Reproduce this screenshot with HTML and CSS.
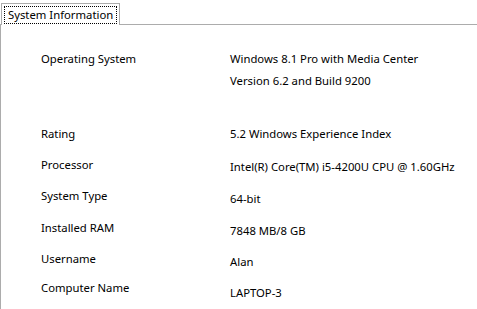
FILE: index.html
```html
<!DOCTYPE html>
<html lang="en">

<head>
    <meta charset="UTF-8">
    <meta name="viewport" content="width=device-width, initial-scale=1.0">
    <title>System Information</title>
    <link rel="stylesheet" href="styles.css">
</head>

<body>

    <div class="tabs">
        <div class="tab-strip">
            <div class="tab active"><span class="tab-label">System Information</span></div>
        </div>

        <div class="tab-page">
            <div class="info-grid">
                <div class="info-row os">
                    <span class="label">Operating System</span>
                    <span class="value">Windows 8.1 Pro with Media Center<br>Version 6.2 and Build 9200</span>
                </div>
                <div class="info-row">
                    <span class="label">Rating</span>
                    <span class="value">5.2 Windows Experience Index</span>
                </div>
                <div class="info-row">
                    <span class="label">Processor</span>
                    <span class="value">Intel(R) Core(TM) i5-4200U CPU @ 1.60GHz</span>
                </div>
                <div class="info-row">
                    <span class="label">System Type</span>
                    <span class="value">64-bit</span>
                </div>
                <div class="info-row">
                    <span class="label">Installed RAM</span>
                    <span class="value">7848 MB/8 GB</span>
                </div>
                <div class="info-row">
                    <span class="label">Username</span>
                    <span class="value">Alan</span>
                </div>
                <div class="info-row">
                    <span class="label">Computer Name</span>
                    <span class="value">LAPTOP-3</span>
                </div>
            </div>
        </div>
    </div>

</body>

</html>
```

FILE: styles.css
```css
body {
    font-family: "Noto Sans", sans-serif;
    font-size: 11.3px;
    margin: 0;
    padding: 0;
    background-color: #fff;
    color: #000;
}

.tabs {
    height: 309px;
    overflow: hidden;
}

.tab-strip {
    display: flex;
    padding: 3px 0 0 1px;
}

.tab {
    position: relative;
    height: 21px;
    margin-bottom: -1px;
    padding: 2px 2px 0 2px;
    border: 1px solid #acacac;
    border-bottom: none;
    background-color: #fff;
    box-sizing: border-box;
}

.tab.active {
    height: 22px;
}

.tab-label {
    display: inline-block;
    padding: 0 3px;
    line-height: 16px;
    border: 1px dotted #000;
}

.tab-page {
    border-top: 1px solid #acacac;
    border-left: 1px solid #acacac;
    height: 300px;
}

.info-grid {
    padding: 26px 0 0 40px;
}

.info-row {
    display: grid;
    grid-template-columns: 189px 1fr;
    height: 31px;
    line-height: 16px;
}

.info-row.os {
    height: 75px;
}

.info-row.os .value {
    line-height: 22px;
    margin-top: -3px;
}

.info-row:nth-child(3) .value {
    margin-top: 2px;
}

.info-row:nth-child(4) {
    height: 32px;
}

.info-row:nth-child(4) .value,
.info-row:nth-child(5) .value,
.info-row:nth-child(6) .value {
    margin-top: 3px;
}

.info-row:nth-child(6) {
    height: 29px;
}

.info-row:nth-child(7) .value {
    margin-top: 5px;
}
```
